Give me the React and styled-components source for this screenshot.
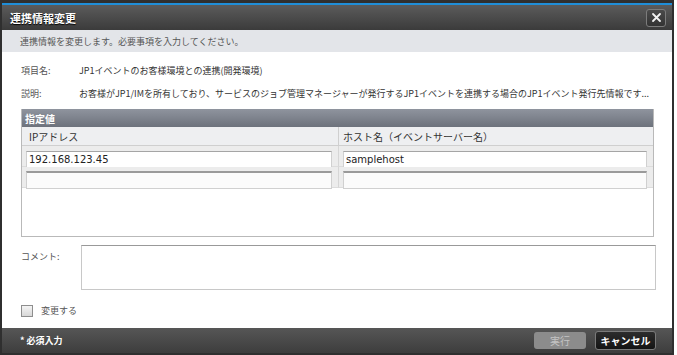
import React from 'react';
import styled, {createGlobalStyle} from 'styled-components';

const GlobalStyle = createGlobalStyle`
  html, body {
    margin: 0;
    padding: 0;
    background: #FFFFFF;
  }
  body {
    font-family: "DejaVu Sans", "Noto Sans CJK JP", sans-serif;
  }
`;

const Dialog = styled.div`
  width: 674px;
  height: 355px;
  box-sizing: border-box;
  display: flex;
  flex-direction: column;
  background: #FFFFFF;
  border: 2px solid #2f2f2f;
  border-top-width: 3px;
  border-bottom-width: 2px;
`;
const TitleBar = styled.div`
  height: 25px;
  flex: none;
  display: flex;
  align-items: center;
  justify-content: space-between;
  padding: 0 6px 0 8px;
  border-top: 2px solid #1f8ed8;
  background: linear-gradient(#5b5b5b, #3b3b3b);
`;
const Title = styled.span`
  font-family: "Noto Sans CJK JP", sans-serif;
  font-size: 11px;
  font-weight: 700;
  color: #FFFFFF;
  text-shadow: 0 1px 1px #000;
`;
const CloseBttn = styled.button`
  width: 20px;
  height: 18px;
  padding: 0;
  display: flex;
  align-items: center;
  justify-content: center;
  border: 1px solid #7c7c7c;
  border-radius: 3px;
  background: linear-gradient(#4a4a4a, #333333);
`;
const SubHeader = styled.div`
  height: 22px;
  flex: none;
  display: flex;
  align-items: center;
  padding-left: 18px;
  background: #e3e5e9;
  font-family: "Noto Sans CJK JP", sans-serif;
  font-size: 9px;
  color: #555555;
`;
const Body = styled.div`
  flex: 1;
  display: flex;
  flex-direction: column;
  padding: 7px 18px 0 19px;
`;
const InfoRow = styled.div`
  height: 23px;
  display: flex;
  align-items: center;
  font-size: 9px;
  color: #333333;
  white-space: nowrap;
  overflow: hidden;
`;
const InfoLabel = styled.span`
  width: 58px;
  flex: none;
  font-family: "Noto Sans CJK JP", sans-serif;
  color: #555555;
`;
const InfoValue = styled.span`
  overflow: hidden;
  text-overflow: ellipsis;
  font-family: "Noto Sans CJK JP", sans-serif;
`;
const Table = styled.div`
  margin-top: 4px;
  height: 128px;
  box-sizing: border-box;
  display: flex;
  flex-direction: column;
  border: 1px solid #b9b9b9;
  border-top: none;
`;
const TableTitle = styled.div`
  height: 18px;
  display: flex;
  align-items: center;
  padding-left: 3px;
  background: linear-gradient(#8f949e, #6d727c);
  font-family: "Noto Sans CJK JP", sans-serif;
  font-size: 10px;
  font-weight: 700;
  color: #FFFFFF;
`;
const Grid = styled.div`
  display: grid;
  grid-template-columns: 316px 1fr;
`;
const HeadCell = styled.div`
  height: 18px;
  display: flex;
  align-items: center;
  padding-left: ${props => props.first ? "7px" : "4px"};
  background: #eeeff1;
  border-bottom: 1px solid #cfcfcf;
  border-left: ${props => props.first ? "none" : "1px solid #cfcfcf"};
  font-family: "Noto Sans CJK JP", sans-serif;
  font-size: 10px;
  color: #333333;
`;
const Cell = styled.div`
  height: 21px;
  box-sizing: border-box;
  padding: 2px 6px 1px 4px;
  background: #ececec;
  border-left: ${props => props.first ? "none" : "1px solid #d6d6d6"};
  border-bottom: 1px solid #dcdcdc;
`;
const CellInput = styled.input`
  width: 100%;
  height: 18px;
  box-sizing: border-box;
  margin: 0;
  padding: 0 2px;
  border: 1px solid #d0d0d0;
  border-top: ${props => props.empty ? "2px solid #9a9a9a" : "1px solid #a5a5a5"};
  background: ${props => props.empty ? "#fbfbfb" : "#FFFFFF"};
  font-family: "DejaVu Sans", sans-serif;
  font-size: 10px;
  color: #222222;
  outline: none;
`;
const CommentRow = styled.div`
  margin-top: 8px;
  display: flex;
  align-items: flex-start;
`;
const CommentLabel = styled.span`
  width: 60px;
  flex: none;
  padding-top: 5px;
  font-family: "Noto Sans CJK JP", sans-serif;
  font-size: 9px;
  color: #555555;
`;
const CommentArea = styled.textarea`
  flex: 1;
  height: 45px;
  box-sizing: border-box;
  margin: 0 -2px 0 0;
  border: 1px solid #c8c8c8;
  border-top-color: #999999;
  resize: none;
  outline: none;
`;
const CheckRow = styled.label`
  margin-top: 14px;
  display: flex;
  align-items: center;
  gap: 8px;
  font-family: "Noto Sans CJK JP", sans-serif;
  font-size: 9px;
  color: #555555;
`;
const CheckBox = styled.span`
  width: 12px;
  height: 12px;
  box-sizing: border-box;
  border: 1px solid #8e8e8e;
  background: linear-gradient(#f4f4f4, #d8d8d8);
`;
const Footer = styled.div`
  height: 25px;
  flex: none;
  display: flex;
  align-items: center;
  padding: 0 16px 0 18px;
  background: linear-gradient(#565656, #3d3d3d);
  font-family: "Noto Sans CJK JP", sans-serif;
`;
const Required = styled.span`
  flex: 1;
  font-size: 9px;
  font-weight: 700;
  color: #FFFFFF;
`;
const FooterBttn = styled.button`
  height: ${props => props.disabled ? "17px" : "19px"};
  width: ${props => props.disabled ? "52px" : "61px"};
  margin-left: ${props => props.disabled ? "0" : "9px"};
  padding: 0;
  border-radius: 3px;
  border: ${props => props.disabled ? "none" : "1px solid #7a7a7a"};
  background: ${props => props.disabled ? "#8c8c8c" : "linear-gradient(#2c2c2c, #141414)"};
  color: ${props => props.disabled ? "#c4c4c4" : "#FFFFFF"};
  font-family: "Noto Sans CJK JP", sans-serif;
  font-size: 10px;
  font-weight: ${props => props.disabled ? "400" : "700"};
`;

const rows = [
    {ip: '192.168.123.45', host: 'samplehost'},
    {ip: '', host: ''}
];

export default function App() {
    return (
        <Dialog>
            <GlobalStyle/>
            <TitleBar>
                <Title>連携情報変更</Title>
                <CloseBttn type="button">
                    <svg width="11" height="11" viewBox="0 0 11 11">
                        <path d="M2 2L9 9M9 2L2 9" stroke="#f2f2f2" strokeWidth="1.8" strokeLinecap="round"/>
                    </svg>
                </CloseBttn>
            </TitleBar>
            <SubHeader>連携情報を変更します。必要事項を入力してください。</SubHeader>
            <Body>
                <InfoRow>
                    <InfoLabel>項目名:</InfoLabel>
                    <InfoValue>JP1イベントのお客様環境との連携(開発環境)</InfoValue>
                </InfoRow>
                <InfoRow>
                    <InfoLabel>説明:</InfoLabel>
                    <InfoValue>お客様がJP1/IMを所有しており、サービスのジョブ管理マネージャーが発行するJP1イベントを連携する場合のJP1イベント発行先情報です...</InfoValue>
                </InfoRow>
                <Table>
                    <TableTitle>指定値</TableTitle>
                    <Grid>
                        <HeadCell first>IPアドレス</HeadCell>
                        <HeadCell>ホスト名（イベントサーバー名）</HeadCell>
                        {rows.map((row, i) => (
                            <React.Fragment key={`row-${i}`}>
                                <Cell first><CellInput empty={!row.ip} defaultValue={row.ip}/></Cell>
                                <Cell><CellInput empty={!row.host} defaultValue={row.host}/></Cell>
                            </React.Fragment>
                        ))}
                    </Grid>
                </Table>
                <CommentRow>
                    <CommentLabel>コメント:</CommentLabel>
                    <CommentArea/>
                </CommentRow>
                <CheckRow>
                    <CheckBox/>
                    変更する
                </CheckRow>
            </Body>
            <Footer>
                <Required>* 必須入力</Required>
                <FooterBttn type="button" disabled>実行</FooterBttn>
                <FooterBttn type="button">キャンセル</FooterBttn>
            </Footer>
        </Dialog>
    );
}
